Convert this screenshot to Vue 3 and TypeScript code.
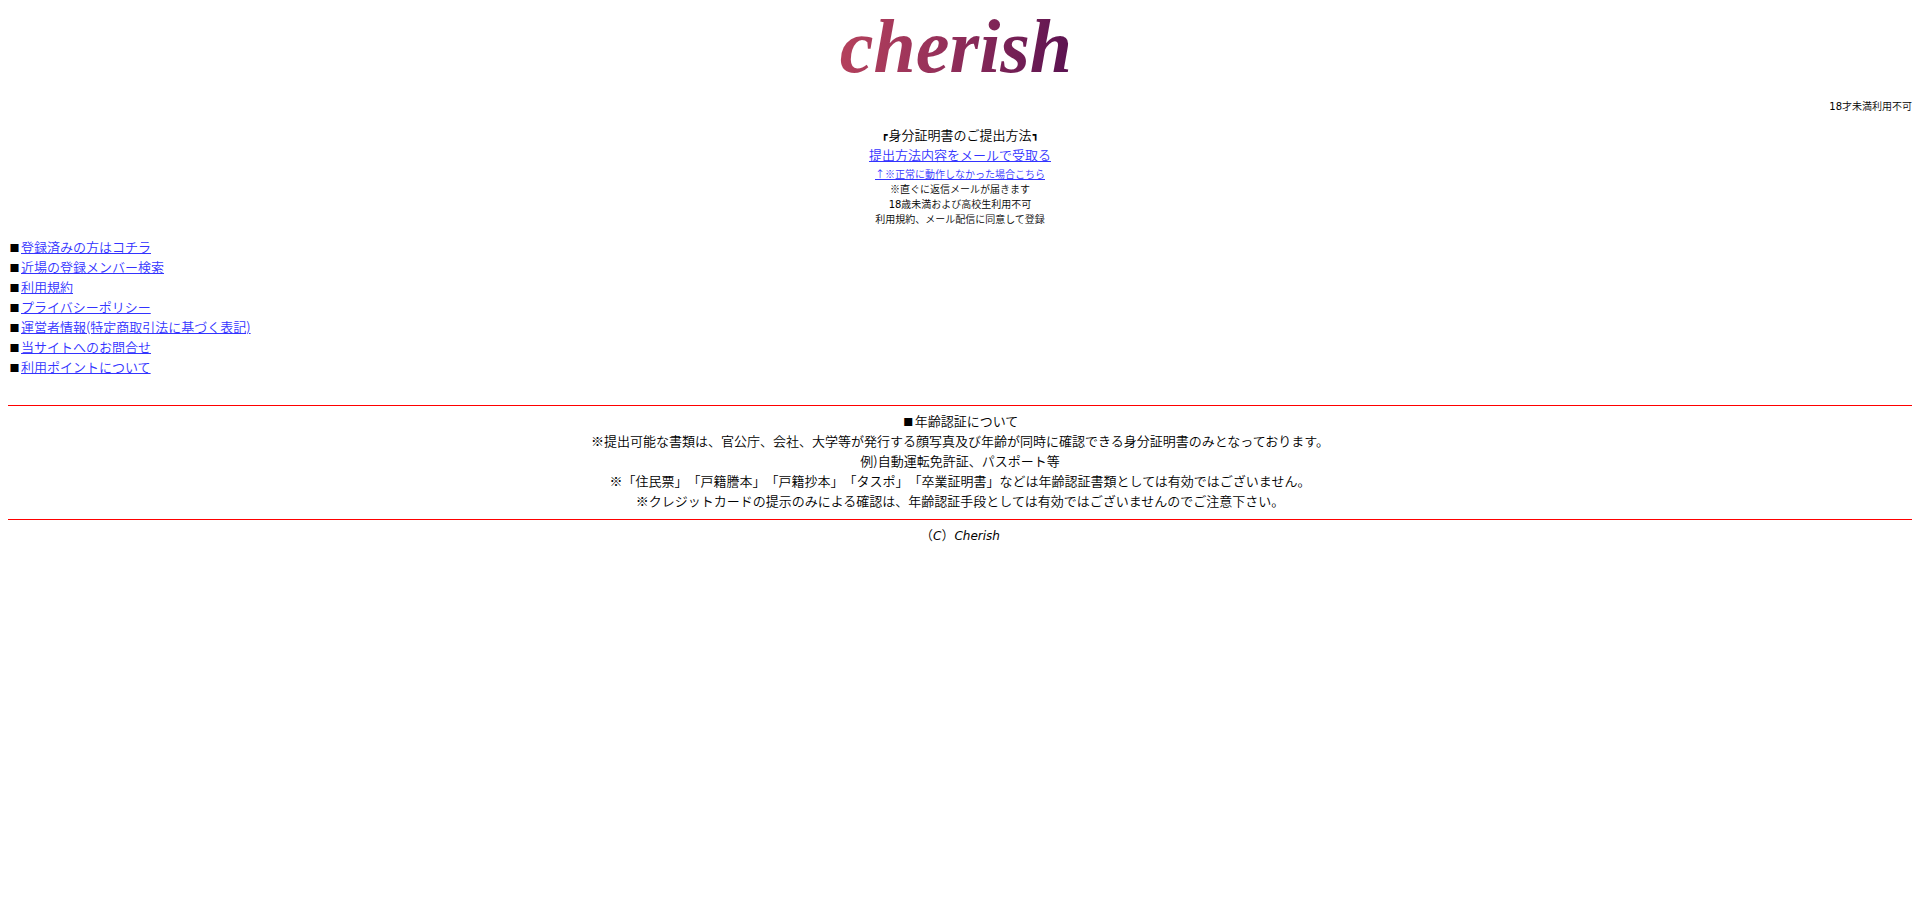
<script setup lang="ts">
interface MenuLink {
  label: string
  href: string
}

const menuLinks: MenuLink[] = [
  { label: '登録済みの方はコチラ', href: '#login' },
  { label: '近場の登録メンバー検索', href: '#search' },
  { label: '利用規約', href: '#terms' },
  { label: 'プライバシーポリシー', href: '#privacy' },
  { label: '運営者情報(特定商取引法に基づく表記)', href: '#company' },
  { label: '当サイトへのお問合せ', href: '#contact' },
  { label: '利用ポイントについて', href: '#points' },
]

const verificationNotes: string[] = [
  '※提出可能な書類は、官公庁、会社、大学等が発行する顔写真及び年齢が同時に確認できる身分証明書のみとなっております。',
  '例)自動運転免許証、パスポート等',
  '※「住民票」「戸籍謄本」「戸籍抄本」「タスポ」「卒業証明書」などは年齢認証書類としては有効ではございません。',
  '※クレジットカードの提示のみによる確認は、年齢認証手段としては有効ではございませんのでご注意下さい。',
]
</script>

<template>
  <div class="page">
    <header>
      <h1 class="logo"><span class="logo-text">cherish</span></h1>
      <p class="age small"><span class="latin">18</span>才未満利用不可</p>
    </header>

    <main>
      <section class="submit">
        <h2 class="line"><span class="corner">┏</span>身分証明書のご提出方法<span class="corner">┓</span></h2>
        <p class="line"><a href="#mail">提出方法内容をメールで受取る</a></p>
        <div class="small-print">
          <p class="small"><a href="#mail-help">↑※正常に動作しなかった場合こちら</a></p>
          <p class="small">※直ぐに返信メールが届きます</p>
          <p class="small"><span class="latin">18</span>歳未満および高校生利用不可</p>
          <p class="small">利用規約、メール配信に同意して登録</p>
        </div>
      </section>

      <nav>
        <ul class="menu">
          <li v-for="link in menuLinks" :key="link.href" class="line"><span class="square">■</span><a :href="link.href">{{ link.label }}</a></li>
        </ul>
      </nav>

      <section class="verification">
        <h2 class="line"><span class="square">■</span>年齢認証について</h2>
        <p v-for="note in verificationNotes" :key="note" class="line">{{ note }}</p>
      </section>
    </main>

    <footer class="line">（<i>C</i>）<i>Cherish</i></footer>
  </div>
</template>

<style>
body {
  background: #fff;
}
</style>

<style scoped>
.page {
  padding: 8px;
  color: #000;
  font-family: "Noto Sans CJK JP", sans-serif;
  font-size: 13px;
  font-weight: 350;
  line-height: 20px;
  text-spacing-trim: space-all;
}

h1,
h2,
p,
ul {
  margin: 0;
  padding: 0;
  font-size: inherit;
  font-weight: inherit;
}

.line {
  line-height: 20px;
}

a {
  color: #33f;
  text-decoration: underline;
}

.logo {
  display: flex;
  justify-content: center;
  padding: 0 8px 12px 0;
  line-height: 76px;
}

.logo-text {
  padding: 0 4px;
  background: linear-gradient(100deg, #b8435c, #95305a 45%, #561050);
  background-clip: text;
  -webkit-background-clip: text;
  color: transparent;
  font-family: "Liberation Serif", serif;
  font-size: 76px;
  font-style: italic;
  font-weight: 700;
}

.small {
  font-size: 10px;
  line-height: 15px;
}

.latin {
  font-family: "DejaVu Sans", sans-serif;
  font-weight: 400;
  line-height: 1;
}

.age {
  padding: 2px 0 12px;
  text-align: right;
}

.submit {
  text-align: center;
}

.small-print {
  padding-top: 1px;
}

.corner {
  display: inline-block;
  width: 8px;
  font-family: "DejaVu Sans", sans-serif;
  font-size: 10px;
  font-weight: 400;
  line-height: 1;
  text-align: center;
  vertical-align: 2px;
}

.menu {
  padding: 11px 0 28px;
  list-style: none;
}

.square {
  display: inline-block;
  width: 13px;
  font-size: 10px;
  line-height: 1;
  text-align: center;
}

.verification {
  padding: 5px 0 8px;
  border-top: 1px solid #f00;
  border-bottom: 1px solid #f00;
  text-align: center;
}

footer {
  padding-top: 5px;
  text-align: center;
}

footer i {
  font-family: "DejaVu Sans", sans-serif;
  font-size: 12px;
  font-weight: 400;
  line-height: 1;
}
</style>
